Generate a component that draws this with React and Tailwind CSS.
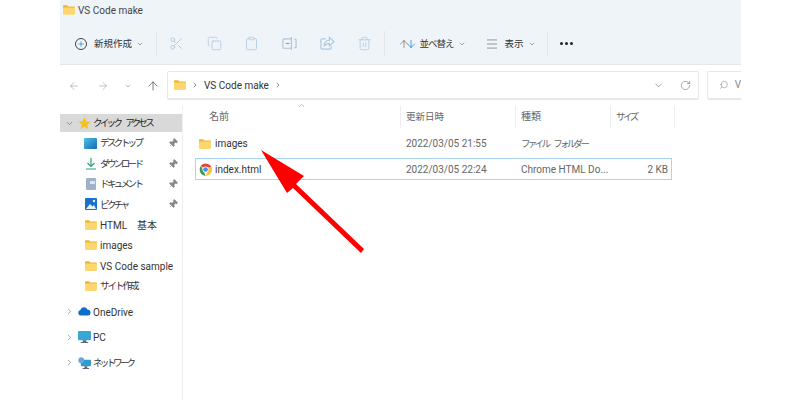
import { ChevronDown, ChevronRight, ArrowLeft, ArrowRight, ArrowUp, RotateCw, Search, Scissors, Copy, Clipboard, Trash2, Menu, Pin, Plus, ChevronUp } from "lucide-react";

function Folder({ className = "" }) {
  return (
    <svg viewBox="0 0 16 13" className={className}>
      <path d="M0 1.5C0 .7.6 0 1.4 0h4l1.6 1.8h7.6c.8 0 1.4.6 1.4 1.4v1H0z" fill="#f0b429" />
      <path d="M0 3.2h16v8.4c0 .8-.6 1.4-1.4 1.4H1.4C.6 13 0 12.4 0 11.6z" fill="#fcd76f" />
    </svg>
  );
}

function ChromeIcon() {
  return (
    <svg viewBox="0 0 24 24" className="w-[13px] h-[13px]">
      <path d="M12 12 L3.2 5.5 A12 12 0 0 1 23.5 8.5 L12 8.5z" fill="#d9483b" />
      <path d="M12 24 A12 12 0 0 1 3.2 5.5 L8.5 14z" fill="#3a9c54" />
      <path d="M12 24 L16 15 L12 8.5 L23.5 8.5 A12 12 0 0 1 12 24z" fill="#f3c53f" />
      <circle cx="12" cy="12" r="5.6" fill="#fff" />
      <circle cx="12" cy="12" r="4.3" fill="#4a8af0" />
    </svg>
  );
}

function RenameIcon(props) {
  return (
    <svg viewBox="0 0 16 16" fill="none" stroke="currentColor" strokeWidth="1" {...props}>
      <path d="M10 3H2a1 1 0 0 0-1 1v8a1 1 0 0 0 1 1h8" />
      <path d="M10 1v14M13 3.500h1.500a.5.5 0 0 1 .5.5v8a.5.5 0 0 1-.5.5H13" />
      <path d="M4 8h4" stroke="#7fa6c4" />
    </svg>
  );
}

function ShareIcon(props) {
  return (
    <svg viewBox="0 0 16 16" fill="none" stroke="currentColor" strokeWidth="1" {...props}>
      <path d="M6 3H2.500A1.500 1.500 0 0 0 1 4.500v8A1.500 1.500 0 0 0 2.500 14h8a1.500 1.500 0 0 0 1.500-1.500V11" />
      <path d="M10 1.500L15 6l-5 4.500V8c-3 0-4.500 1-5.500 3 0-4 2-6.500 5.500-6.500z" stroke="#a9c6dd" />
    </svg>
  );
}

function ToolBtn({ icon: Icon, className = "" }) {
  return (
    <div className={"w-[37.6px] flex justify-center " + className}>
      <Icon width={15} height={15} strokeWidth={1.2} className="text-[#a9c6dd]" />
    </div>
  );
}

function NavRow({ icon, label, pinned, kana }) {
  return (
    <div className="h-[20.4px] flex items-center pl-[24px] pr-[4px]">
      <div className="w-[13px] flex justify-center mr-[3px]">{icon}</div>
      <span className={"flex-1 whitespace-nowrap " + (kana ? "text-[9.5px] tracking-[-2.6px]" : "pt-[2px]")}>{label}</span>
      {pinned && <Pin size={10} strokeWidth={1.5} className="text-[#888] fill-[#888] rotate-45" />}
    </div>
  );
}

function RootRow({ icon, label, kana }) {
  return (
    <div className="h-[25.4px] flex items-center pl-[5px]">
      <ChevronRight size={9} strokeWidth={1.5} className="text-[#666] mr-[3px]" />
      <div className="w-[14px] flex justify-center mr-[2px]">{icon}</div>
      <span className={kana ? "text-[9.5px] tracking-[-2.8px]" : "pt-[2px]"}>{label}</span>
    </div>
  );
}

const folder = <Folder className="w-[12px] h-[10px]" />;

export default function App() {
  return (
    <div className="w-[800px] h-[400px] bg-white relative overflow-hidden text-[10px] leading-none text-[#333] font-['Roboto','Noto_Sans_CJK_JP',sans-serif]">
      <div className="ml-[60px] w-[681px] h-full flex flex-col">
        {/* title + command bar */}
        <div className="h-[65px] shrink-0 bg-[#eff4f9] border-b border-[#e2e7ec]">
          <div className="h-[20px] flex items-center pl-[3px] gap-[3px]">
            <Folder className="w-[12px] h-[10px]" />
            <span className="text-[#444] pt-[1px]">VS Code make</span>
          </div>
          <div className="mt-[11px] h-[25px] flex items-center">
            <div className="flex items-center pl-[15px] w-[96px]">
              <div className="w-[12px] h-[12px] rounded-full border border-[#444] flex items-center justify-center mr-[7px]">
                <Plus size={8} strokeWidth={2} className="text-[#1a7fd4]" />
              </div>
              <span className="text-[9.5px]">新規作成</span>
              <ChevronDown size={8} className="ml-[4px] text-[#777]" />
            </div>
            <div className="w-px h-[25px] bg-[#e2e7ec]" />
            <div className="flex items-center">
              <ToolBtn icon={Scissors} className="ml-[1px]" />
              <ToolBtn icon={Copy} />
              <ToolBtn icon={Clipboard} />
              <ToolBtn icon={RenameIcon} />
              <ToolBtn icon={ShareIcon} />
              <ToolBtn icon={Trash2} />
            </div>
            <div className="w-px h-[25px] bg-[#e2e7ec]" />
            <div className="flex items-center ml-[13px] w-[74px]">
              <ArrowUp size={12} strokeWidth={1.2} className="text-[#555] -mr-[5px]" />
              <ArrowUp size={12} strokeWidth={1.5} className="text-[#1a7fd4] rotate-180 mr-[3px]" />
              <span className="text-[9.5px] tracking-[-1px]">並べ替え</span>
              <ChevronDown size={8} className="ml-[4px] text-[#777]" />
            </div>
            <div className="flex items-center ml-[13px] w-[62px]">
              <Menu size={14} strokeWidth={1} className="text-[#555] mr-[6px]" />
              <span className="text-[9.5px]">表示</span>
              <ChevronDown size={8} className="ml-[4px] text-[#777]" />
            </div>
            <div className="w-px h-[25px] bg-[#e2e7ec]" />
            <div className="flex gap-[2px] ml-[12px]">
              <div className="w-[3px] h-[3px] rounded-full bg-[#222]" />
              <div className="w-[3px] h-[3px] rounded-full bg-[#222]" />
              <div className="w-[3px] h-[3px] rounded-full bg-[#222]" />
            </div>
          </div>
        </div>

        {/* address row */}
        <div className="h-[41px] shrink-0 flex items-center">
          <div className="flex items-center w-[107px] pl-[8px] text-[#999]">
            <ArrowLeft size={12} strokeWidth={1.2} />
            <ArrowRight size={12} strokeWidth={1.2} className="ml-[17px]" />
            <ChevronDown size={8} className="ml-[15px]" />
            <ArrowUp size={14} strokeWidth={1.3} className="ml-[14px] text-[#555]" />
          </div>
          <div className="w-[532px] h-[29px] bg-white border border-[#e8e8e8] border-b-2 rounded-[2px] flex items-center pl-[6px] pr-[7px]">
            <Folder className="w-[12px] h-[10px]" />
            <ChevronRight size={8} className="ml-[5px] mr-[5px] text-[#555]" />
            <span className="pt-[1px]">VS Code make</span>
            <ChevronRight size={8} className="ml-[5px] text-[#555]" />
            <ChevronDown size={11} strokeWidth={1.2} className="ml-auto text-[#555]" />
            <RotateCw size={11} strokeWidth={1.2} className="ml-[16px] text-[#666]" />
          </div>
          <div className="ml-[8px] w-[34px] h-[29px] border border-r-0 border-[#e8e8e8] border-b-2 rounded-l-[2px] flex items-center pl-[11px] overflow-hidden">
            <Search size={10} strokeWidth={1.2} className="text-[#777] -scale-x-100" />
            <span className="ml-[6px] text-[#888]">V</span>
          </div>
        </div>

        <div className="flex-1 flex min-h-0">
          {/* nav pane */}
          <div className="w-[123px] shrink-0 border-r border-[#f0f0f0] pt-[8px]">
            <div className="h-[18px] bg-[#d9d9d9] flex items-center pl-[5px] text-[#222]">
              <ChevronDown size={9} strokeWidth={1.5} className="text-[#555] mr-[4px]" />
              <svg viewBox="0 0 24 24" className="w-[13px] h-[13px] mr-[2px]">
                <path d="M12 1l3.4 7.2 7.6 1-5.6 5.4 1.5 7.9L12 18l-6.9 3.5 1.5-7.9L1 8.200l7.600-1z" fill="#f5c21b" />
              </svg>
              <span className="text-[9.5px] tracking-[-2.7px]">クイック</span>
              <span className="ml-[5px] text-[9.5px] tracking-[-2.7px]">アクセス</span>
            </div>
            <div className="pt-[1px]">
              <NavRow pinned kana label="デスクトップ" icon={<div className="w-[13px] h-[11px] rounded-[1px] bg-gradient-to-br from-[#4fc0e8] to-[#0f6cb0]" />} />
              <NavRow pinned kana label="ダウンロード" icon={<svg viewBox="0 0 12 12" className="w-[12px] h-[12px]" fill="none" stroke="#2aa07f" strokeWidth="1.2"><path d="M6 0v8M2.500 5l3.500 3.500L9.500 5M1 11h10" /></svg>} />
              <NavRow pinned kana label="ドキュメント" icon={<div className="w-[10px] h-[12px] bg-[#9fb2c8] rounded-[1px] flex justify-end pt-[3px] pr-[1px]"><div className="w-[5px] h-[3px] bg-[#dde5ee]" /></div>} />
              <NavRow pinned kana label="ピクチャ" icon={<svg viewBox="0 0 12 12" className="w-[12px] h-[12px]"><rect width="12" height="12" rx="1" fill="#1c70c8" /><path d="M1 11l4-5 2.500 2.500L9 7l2 4z" fill="#e6f2fb" /><circle cx="9" cy="3" r="1.200" fill="#e6f2fb" /></svg>} />
              <NavRow label="HTML　基本" icon={folder} />
              <NavRow label="images" icon={folder} />
              <NavRow label="VS Code sample" icon={folder} />
              <div className="h-[20.4px] flex items-center pl-[24px]">
                <div className="w-[13px] flex justify-center mr-[3px]">{folder}</div>
                <span className="text-[9.5px] tracking-[-2px]">サイト作成</span>
              </div>
            </div>
            <div className="pt-[3px]">
              <RootRow label="OneDrive" icon={<svg viewBox="0 0 16 10" className="w-[13px] h-[9px]"><path d="M3.500 10A3.500 3.500 0 0 1 3 3.100 4.500 4.500 0 0 1 11.500 2.500 3.800 3.800 0 0 1 12.500 10z" fill="#0f6fc6" /></svg>} />
              <RootRow label="PC" icon={<svg viewBox="0 0 14 13" className="w-[13px] h-[12px]"><rect width="14" height="10" rx="1" fill="#3aa6d6" /><path d="M5 10h4v2h2v1H3v-1h2z" fill="#667" /></svg>} />
              <RootRow kana label="ネットワーク" icon={<svg viewBox="0 0 14 13" className="w-[13px] h-[12px]"><rect x="3" y="3" width="11" height="7" rx="1" fill="#2b9ccf" /><path d="M7 10h3v2h2v1H5v-1h2z" fill="#667" /><circle cx="3.500" cy="3.500" r="3.200" fill="#6aa7d8" /></svg>} />
            </div>
          </div>

          {/* file list */}
          <div className="flex-1 pl-[13px] min-w-0 relative">
            <ChevronUp size={9} strokeWidth={1.2} className="absolute left-[114px] -top-[5px] text-[#777]" />
            <div className="h-[22px] flex items-center text-[#666]">
              <div className="w-[205px] h-full flex items-center pl-[13px] border-r border-[#eeeeee]">名前</div>
              <div className="w-[115px] h-full flex items-center pl-[5px] border-r border-[#eeeeee] text-[9.5px]">更新日時</div>
              <div className="w-[95px] h-full flex items-center pl-[5px] border-r border-[#eeeeee]">種類</div>
              <div className="w-[64px] h-full flex items-center pl-[5px] border-r border-[#eeeeee] text-[9.5px] tracking-[-2.500px]">サイズ</div>
            </div>
            <div className="mt-[5px] h-[21px] flex items-center">
              <div className="w-[205px] flex items-center pl-[3px] gap-[4px]">
                <Folder className="w-[12px] h-[10px]" />
                <span className="pt-[1px]">images</span>
              </div>
              <div className="w-[115px] pl-[5px] pt-[1px] text-[#666]">2022/03/05 21:55</div>
              <div className="w-[95px] pl-[5px] flex text-[#666] whitespace-nowrap text-[9.5px] tracking-[-2.7px]">
                <span>ファイル</span>
                <span className="ml-[5px]">フォルダー</span>
              </div>
            </div>
            <div className="mt-[4px] h-[20px] w-[475px] flex items-center border border-[#a8d4f5] -ml-px box-content">
              <div className="w-[205px] flex items-center pl-[3px] gap-[3px]">
                <ChromeIcon />
                <span className="pt-[1px]">index.html</span>
              </div>
              <div className="w-[115px] pl-[5px] pt-[1px] text-[#666]">2022/03/05 22:24</div>
              <div className="w-[95px] pl-[5px] pt-[1px] text-[#666] whitespace-nowrap">Chrome HTML Do...</div>
              <div className="w-[57px] pt-[1px] text-right text-[#666]">2 KB</div>
            </div>
          </div>
        </div>
      </div>

      {/* annotation arrow */}
      <svg className="absolute inset-0 pointer-events-none" width="800" height="400" viewBox="0 0 800 400">
        <path d="M261 150L304 176L296 184L364 249L361 253L293 188L287 193z" fill="#ff0000" />
      </svg>
    </div>
  );
}
